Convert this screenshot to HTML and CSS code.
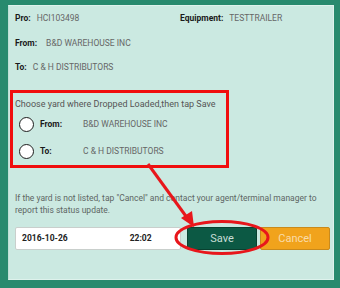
FILE: index.html
```html
<!DOCTYPE html>
<html lang="en">
<head>
    <meta charset="UTF-8">
    <meta name="viewport" content="width=device-width, initial-scale=1.0">
    <title>Drop Loaded</title>
    <link rel="stylesheet" href="styles.css">
</head>
<body>
    <div class="panel">
        <div class="info-row">
            <div class="info-cell pro"><b>Pro:</b> <span>HCI103498</span></div>
            <div class="info-cell"><b>Equipment:</b> <span class="equip">TESTTRAILER</span></div>
        </div>
        <div class="info-row"><b>From:</b> <span class="from-val">B&amp;D WAREHOUSE INC</span></div>
        <div class="info-row"><b>To:</b> <span class="to-val">C &amp; H DISTRIBUTORS</span></div>

        <div class="yard-box">
            <div class="yard-title">Choose yard where Dropped Loaded,then tap Save</div>
            <label class="yard-option">
                <span class="radio"></span>
                <b class="opt-label">From:</b>
                <span class="opt-value">B&amp;D WAREHOUSE INC</span>
            </label>
            <label class="yard-option">
                <span class="radio"></span>
                <b class="opt-label">To:</b>
                <span class="opt-value">C &amp; H DISTRIBUTORS</span>
            </label>
        </div>

        <p class="note">If the yard is not listed, tap "Cancel" and contact your agent/terminal manager to report this status update.</p>

        <div class="actions">
            <div class="datetime">
                <span class="date">2016-10-26</span>
                <span class="time">22:02</span>
            </div>
            <button class="btn save">Save</button>
            <button class="btn cancel">Cancel</button>
        </div>
    </div>

    <!-- annotation overlay -->
    <svg class="marks" width="340" height="288" viewBox="0 0 340 288">
        <line x1="148" y1="164" x2="188" y2="219" stroke="#e8161b" stroke-width="3"/>
        <polygon points="194,227 181,218 192,211" fill="#e8161b"/>
        <ellipse cx="222" cy="237.5" rx="46" ry="16" fill="none" stroke="#e8161b" stroke-width="3"/>
    </svg>
</body>
</html>
```

FILE: styles.css
```css
* {
    margin: 0;
    padding: 0;
    box-sizing: border-box;
}

body {
    width: 340px;
    height: 288px;
    background: #288a6e;
    font-family: Roboto, "Liberation Sans", sans-serif;
    position: relative;
    overflow: hidden;
    padding: 5px 6px 8px 8px;
}

.panel {
    height: 275px;
    background: #cbe9e1;
    border: 1px solid #def2ec;
    border-left-color: #bfe0d7;
    padding-left: 6px;
}

.info-row {
    display: flex;
    height: 24.5px;
    line-height: 24px;
    font-size: 8.5px;
    color: #666;
}

.info-row b {
    color: #1a1a1a;
    margin-right: 4px;
}

.info-cell.pro {
    width: 165px;
}

.from-val {
    margin-left: 5px;
}

.to-val {
    margin-left: 2px;
}

.yard-box {
    margin: 10px 0 0 -5px;
    width: 219px;
    height: 78px;
    border: 3px solid #f00e0e;
    padding: 4px 0 0 2px;
}

.yard-title {
    font-size: 9px;
    line-height: 14px;
    color: #555;
    white-space: nowrap;
}

.yard-option {
    display: flex;
    align-items: center;
    height: 27px;
    font-size: 8.5px;
}

.radio {
    width: 15px;
    height: 15px;
    border: 1.5px solid #1d1d1d;
    border-radius: 50%;
    background: #fff;
    margin-left: 4px;
    margin-right: 6px;
}

.opt-label {
    width: 43px;
    color: #1a1a1a;
}

.opt-value {
    color: #666;
}

.note {
    margin-top: 24px;
    font-size: 8.5px;
    line-height: 12px;
    color: #5e6664;
    padding-right: 12px;
}

.actions {
    display: flex;
    margin-top: 11px;
    height: 23px;
    gap: 3px;
    padding-right: 3px;
}

.datetime {
    width: 166px;
    background: #fff;
    border: 1px solid #c9cfcc;
    border-radius: 2px;
    display: flex;
    align-items: center;
    padding-left: 6px;
    font-size: 8.5px;
    font-weight: bold;
    color: #222;
}

.time {
    margin-left: 62px;
}

.btn {
    font-family: Roboto, "Liberation Sans", sans-serif;
    font-size: 11px;
    border-radius: 2px;
}

.save {
    margin-left: 3px;
    width: 70px;
    background: #0c5944;
    border: 1px solid #09402f;
    color: #c7ddd6;
}

.cancel {
    width: 70px;
    background: #f1a31c;
    border: 1px solid #c98a1c;
    color: #f9dcaa;
}

.marks {
    position: absolute;
    left: 0;
    top: 0;
    pointer-events: none;
}
```
